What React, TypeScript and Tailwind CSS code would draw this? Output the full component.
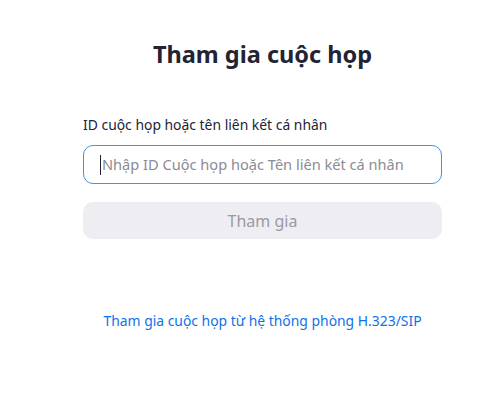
import React from "react";

export default function App() {
  return (
    <div className="w-[496px] h-[411px] bg-white" style={{ fontFamily: '"Noto Sans", "Open Sans", sans-serif' }}>
      <div className="ml-[83px] w-[359px] flex flex-col">
        <h1 className="mt-[38px] text-center text-[23.5px] leading-[32px] font-bold text-[#232333]">Tham gia cuộc họp</h1>
        <label className="mt-[45px] text-[13.9px] leading-[20px] text-[#232333]">ID cuộc họp hoặc tên liên kết cá nhân</label>
        <div className="mt-[10px] h-[39px] rounded-[10px] border border-[#4a90e2] flex items-center pl-[16px]">
          <span className="w-px h-[20px] bg-[#232333] mr-[1px]"></span>
          <span className="text-[14.6px] text-[#8b8b94]">Nhập ID Cuộc họp hoặc Tên liên kết cá nhân</span>
        </div>
        <div className="mt-[18px] h-[37px] rounded-[10px] bg-[#ededf2] flex items-center justify-center text-[16px] text-[#9a9aa3]">Tham gia</div>
        <div className="mt-[72px] text-center text-[13.9px] text-[#0e71eb]">Tham gia cuộc họp từ hệ thống phòng H.323/SIP</div>
      </div>
    </div>
  );
}
